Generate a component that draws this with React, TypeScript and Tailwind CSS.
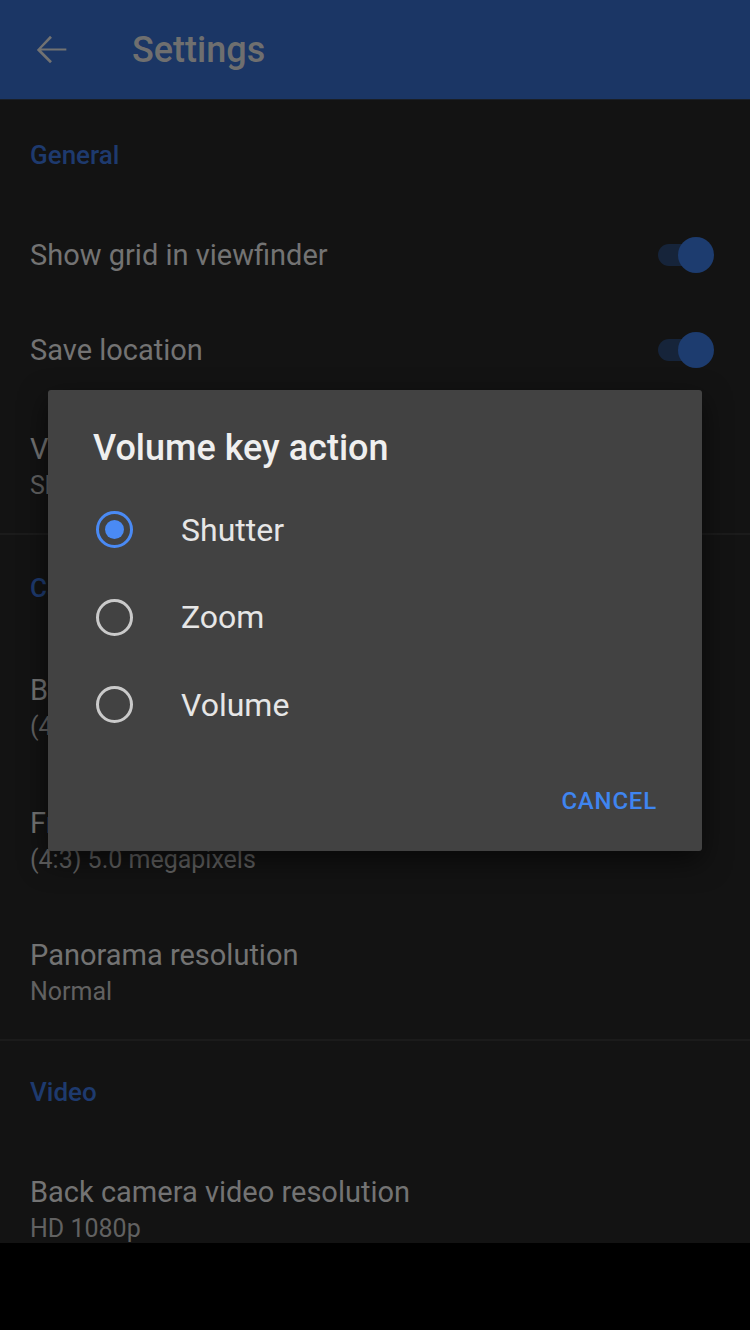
import React from "react";

type Row = { title: string; subtitle?: string; toggle?: boolean };

function Toggle() {
  return (
    <div className="relative w-[60px] h-[40px] flex items-center">
      <div className="w-[44px] h-[22px] rounded-full bg-[#16243a] ml-[2px]" />
      <div className="absolute right-[2px] top-[2px] w-[36px] h-[36px] rounded-full bg-[#1d3c6f]" />
    </div>
  );
}

function Category({ label, h }: { label: string; h: string }) {
  return (
    <div className={`shrink-0 flex items-center px-[30px] ${h}`}>
      <span className="text-[26px] font-medium text-[#1e3a6e]">{label}</span>
    </div>
  );
}

function SettingRow({ row, h }: { row: Row; h: string }) {
  return (
    <div className={`shrink-0 flex items-center justify-between pl-[30px] pr-[34px] ${h}`}>
      <div className="flex flex-col">
        <span className="text-[29px] leading-[38px] text-[#737373] whitespace-nowrap">{row.title}</span>
        {row.subtitle && (
          <span className="text-[25px] leading-[36px] text-[#616161] whitespace-nowrap">{row.subtitle}</span>
        )}
      </div>
      {row.toggle && <Toggle />}
    </div>
  );
}

function Radio({ checked }: { checked: boolean }) {
  return checked ? (
    <div className="w-[37px] h-[37px] rounded-full border-[3px] border-[#4a8af4] flex items-center justify-center">
      <div className="w-[19px] h-[19px] rounded-full bg-[#4a8af4]" />
    </div>
  ) : (
    <div className="w-[37px] h-[37px] rounded-full border-[3px] border-[#cacaca]" />
  );
}

const options = ["Shutter", "Zoom", "Volume"];

export default function App() {
  return (
    <div
      className="relative w-[750px] h-[1330px] bg-black overflow-hidden"
      style={{ fontFamily: "Roboto, 'Noto Sans', sans-serif" }}
    >
      <div className="h-[1243px] bg-[#131313] overflow-hidden flex flex-col">
        {/* app bar */}
        <div className="h-[100px] shrink-0 bg-[#1b3665] flex items-center border-b border-[#1a1f27]">
          <div className="w-[132px] flex items-center pl-[28px]">
            <svg width="46" height="46" viewBox="0 0 24 24" fill="#727272">
              <path d="M20 11.2H6.9l5.6-5.6-1-1L4.6 12l6.9 6.9 1-1-5.6-5.6H20z" />
            </svg>
          </div>
          <span className="text-[36px] font-medium text-[#6f6f6f]">Settings</span>
        </div>

        <Category label="General" h="h-[110px]" />
        <SettingRow row={{ title: "Show grid in viewfinder", toggle: true }} h="h-[90px]" />
        <SettingRow row={{ title: "Save location", toggle: true }} h="h-[100px]" />
        <SettingRow row={{ title: "Volume key action", subtitle: "Shutter" }} h="h-[133px]" />
        <div className="h-[2px] shrink-0 bg-[#1b1b1b]" />

        <Category label="Camera" h="h-[106px]" />
        <SettingRow
          row={{ title: "Back camera photo resolution", subtitle: "(4:3) 12.2 megapixels" }}
          h="h-[133px]"
        />
        <SettingRow
          row={{ title: "Front camera photo resolution", subtitle: "(4:3) 5.0 megapixels" }}
          h="h-[133px]"
        />
        <SettingRow row={{ title: "Panorama resolution", subtitle: "Normal" }} h="h-[132px]" />
        <div className="h-[2px] shrink-0 bg-[#1b1b1b]" />

        <Category label="Video" h="h-[102px]" />
        <SettingRow
          row={{ title: "Back camera video resolution", subtitle: "HD 1080p" }}
          h="h-[133px]"
        />
      </div>

      {/* dialog */}
      <div className="absolute left-[48px] top-[390px] w-[654px] h-[461px] bg-[#424242] rounded-[3px] shadow-[0_10px_28px_rgba(0,0,0,0.55)] flex flex-col">
        <div className="pl-[45px] pt-[37px] h-[96px]">
          <span className="text-[36px] leading-[42px] font-medium text-[#efefef]">Volume key action</span>
        </div>
        <div className="flex flex-col">
          {options.map((o, i) => (
            <div key={o} className="flex items-center h-[87.5px] pl-[48px]">
              <Radio checked={i === 0} />
              <span className="ml-[48px] text-[32px] text-[#e6e6e6]">{o}</span>
            </div>
          ))}
        </div>
        <div className="flex-1 flex items-center justify-end pr-[45px] pt-[2px]">
          <span className="text-[24px] font-medium tracking-[0.8px] text-[#3f85f0]">CANCEL</span>
        </div>
      </div>
    </div>
  );
}
